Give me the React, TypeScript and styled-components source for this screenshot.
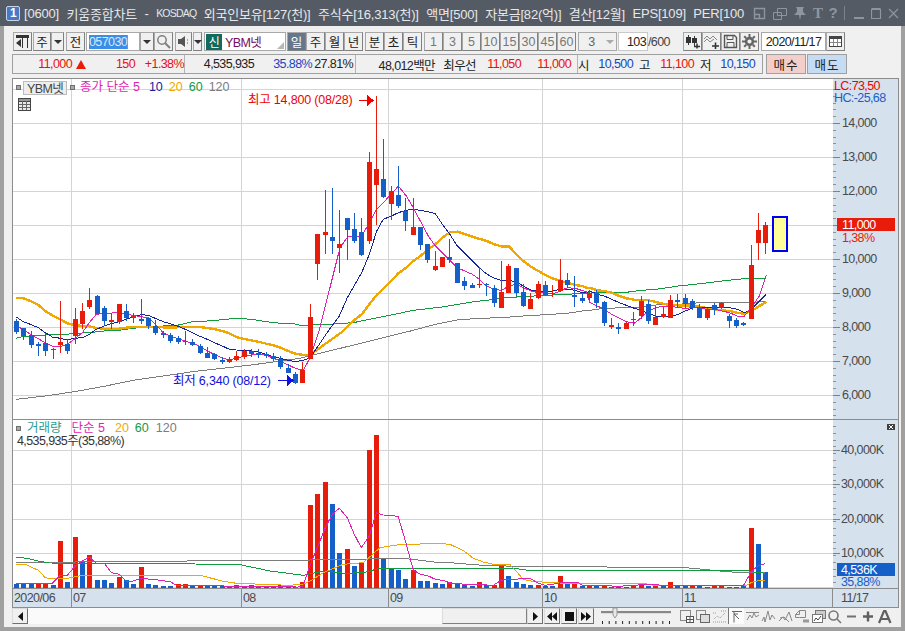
import { FC, ReactNode } from 'react';
import styled, { createGlobalStyle } from 'styled-components';

const uiFont = `"Liberation Sans", "Noto Sans CJK KR", sans-serif`;
const hangulFont = `"Noto Sans CJK KR", "Liberation Sans", sans-serif`;

const red = '#e81c0a';
const blue = '#1560c8';
const magenta = '#e01fb4';
const navy = '#14249c';
const orange = '#f0a800';
const green = '#129a3e';
const grey = '#7c7c7c';
const gridColor = '#d4d4d4';

type Dir = 'r' | 'b';
type Candle = [Dir, number, number, number, number];

// traced off the chart at 3x, so every block has its own origin
const zoomY = (oy: number, c: Candle[]): Candle[] =>
	c.map(([d, a, b, e, f]) => [d, oy + a / 3, oy + b / 3, oy + e / 3, oy + f / 3]);

const candles: Candle[] = [
	...zoomY(280, [
		['b', 115, 158, 119, 152], ['b', 140, 176, 141, 165], ['b', 150, 200, 162, 192], ['b', 182, 224, 190, 196],
		['b', 157, 224, 185, 210], ['b', 200, 233, 203, 208], ['r', 60, 215, 183, 192], ['b', 175, 220, 189, 210],
		['r', 80, 190, 114, 166], ['r', 67, 143, 90, 128], ['r', 22, 83, 57, 78], ['b', 42, 100, 45, 99],
		['b', 75, 135, 82, 120], ['r', 95, 145, 117, 122], ['r', 69, 130, 69, 122], ['b', 70, 120, 90, 110],
		['r', 95, 125, 105, 110], ['b', 54, 130, 114, 119], ['b', 110, 145, 111, 136], ['b', 118, 163, 136, 155],
		['b', 150, 172, 157, 163], ['b', 155, 185, 162, 180], ['b', 165, 188, 171, 182], ['b', 150, 192, 181, 184],
		['b', 174, 195, 183, 191], ['b', 190, 220, 195, 216], ['b', 198, 232, 216, 231], ['b', 215, 237, 219, 234],
		['b', 228, 250, 236, 244], ['r', 228, 245, 233, 243], ['r', 210, 240, 226, 238], ['r', 205, 235, 211, 229],
		['b', 205, 228, 209, 219], ['b', 205, 230, 217, 221], ['b', 212, 230, 218, 225], ['b', 215, 240, 225, 234],
		['b', 225, 263, 234, 258], ['b', 250, 276, 260, 276], ['b', 274, 308, 280, 306], ['r', 243, 305, 267, 305],
		['r', 70, 233, 108, 233],
	]),
	...zoomY(90, [
		['r', 430, 566, 430, 518], ['r', 297, 490, 423, 432], ['b', 292, 490, 438, 450], ['r', 357, 545, 460, 470],
		['b', 380, 508, 381, 416], ['b', 366, 455, 415, 450], ['b', 381, 496, 423, 491], ['r', 183, 460, 213, 450],
		['r', 15, 403, 234, 281], ['b', 144, 322, 265, 317], ['r', 285, 388, 300, 338], ['b', 225, 352, 312, 344],
		['b', 322, 420, 361, 389], ['r', 321, 433, 408, 431], ['b', 408, 476, 408, 461], ['b', 460, 515, 460, 506],
		['r', 480, 539, 526, 536], ['r', 498, 527, 498, 527], ['b', 444, 515, 498, 506], ['b', 516, 575, 516, 575],
		['b', 558, 596, 570, 584], ['b', 575, 592, 582, 590], ['r', 528, 590, 578, 581], ['b', 575, 615, 579, 581],
		['b', 582, 648, 592, 635], ['r', 510, 650, 603, 650], ['r', 519, 605, 525, 605], ['b', 531, 615, 531, 605],
		['b', 580, 648, 603, 644], ['r', 605, 653, 624, 653], ['r', 570, 625, 579, 622], ['b', 570, 615, 582, 611],
		['r', 583, 617, 605, 609], ['r', 505, 603, 567, 600], ['b', 546, 590, 567, 581], ['b', 555, 647, 611, 617],
		['b', 610, 635, 620, 630], ['r', 598, 628, 607, 620], ['b', 598, 650, 606, 635],
	]),
	...zoomY(200, [
		['b', 300, 376, 303, 365], ['r', 352, 383, 372, 377], ['b', 365, 398, 379, 383], ['r', 360, 385, 366, 384],
		['r', 333, 375, 354, 357], ['r', 285, 355, 300, 345], ['b', 298, 368, 310, 359], ['r', 315, 372, 347, 372],
		['r', 318, 350, 338, 348], ['r', 283, 352, 297, 350], ['b', 278, 320, 297, 303], ['b', 280, 320, 291, 308],
		['b', 295, 328, 300, 320], ['b', 310, 350, 318, 350], ['r', 320, 357, 324, 350], ['b', 306, 342, 312, 327],
		['r', 303, 325, 306, 322], ['b', 340, 380, 345, 359], ['b', 352, 380, 357, 375], ['b', 363, 376, 367, 371],
		['r', 132, 353, 192, 353], ['r', 37, 177, 87, 125], ['r', 63, 160, 72, 125],
	]),
];

const parseBars = (src: string, oy: number): [Dir, number][] =>
	src.split(' ').map((s) => [s[0] as Dir, oy + Number(s.slice(1)) / 3]);

const volumes: [Dir, number][] = [
	...parseBars(
		'b188 b188 b188 r188 r186 b191 r60 b183 r48 b122 r102 b177 b177 b186 r168 b177 b189 r138 b189 b192 b195 b195 r189 r189 b195 r195 b195 b195 b195 b197 r192 b195 r192 b197 b197 r195 r192 b197 b197 r183',
		520
	),
	...parseBars(
		'r252 r219 r183 b249 b396 r384 b435 r423 r87 r42 b414 b443 b447 b474 r447 b480 b480 b486 b489 r483 b489',
		420
	),
	...parseBars(
		'b102 b105 r93 b101 r101 r42 b75 b93 b99 b102 r102 b106 b104 r75 b98 r98 b105 r101 b105 r104 b107 r107 b107 r102 r98 b104 r105 b103 r93 b105 b105 r106 b105 b107 r106 r106 r107 b107 b106',
		550
	),
	['r', 527],
	['b', 543],
	['b', 571],
];

const barX = (i: number): number => Math.floor(16.3 + 7.35 * i);

const traced = (ox: number, oy: number, pts: number[]): string => {
	const out: string[] = [];
	for (let i = 0; i < pts.length; i += 2) {
		out.push(`${(ox + pts[i] / 3).toFixed(1)},${(oy + pts[i + 1] / 3).toFixed(1)}`);
	}
	return out.join(' ');
};

const priceLines = [
	{
		color: grey,
		width: 1,
		points: [
			traced(0, 280, [49, 355, 136, 345, 223, 332, 313, 316, 400, 298, 511, 282, 577, 272, 667, 262, 754, 252, 841, 240, 900, 232]),
			traced(300, 90, [60, 787, 340, 718, 406, 700, 472, 687, 538, 682, 604, 680, 670, 675, 736, 671, 802, 667, 860, 658]),
			traced(590, 200, [0, 328, 43, 322, 109, 320, 154, 318, 199, 312, 265, 310, 331, 305, 397, 305, 463, 305, 484, 305, 529, 300]),
		],
	},
	{
		color: green,
		width: 1,
		points: [
			traced(0, 280, [49, 172, 70, 166, 91, 165, 136, 162, 202, 160, 223, 157, 268, 155, 313, 150, 358, 148, 400, 142, 445, 137, 490, 135, 532, 133, 577, 122, 622, 120, 667, 116, 709, 112, 754, 115, 799, 122, 841, 127, 886, 129]),
			traced(300, 90, [0, 703, 85, 700, 160, 695, 208, 685, 274, 672, 340, 658, 427, 648, 517, 633, 583, 625, 604, 620, 670, 617, 736, 613, 802, 610, 860, 606]),
			traced(590, 200, [0, 273, 43, 274, 109, 274, 154, 268, 199, 265, 265, 255, 331, 248, 397, 240, 442, 235, 484, 232, 529, 231]),
		],
	},
	{
		color: orange,
		width: 2.4,
		points: [
			traced(0, 280, [49, 50, 70, 52, 91, 60, 115, 72, 136, 90, 157, 103, 181, 115, 202, 127, 223, 132, 247, 135, 268, 136, 289, 141, 313, 143, 334, 144, 358, 143, 379, 140, 400, 138, 424, 137, 445, 137, 466, 138, 490, 139, 532, 139, 556, 138, 598, 138, 622, 141, 643, 144, 667, 150, 688, 157, 709, 168, 733, 174, 754, 178, 775, 182, 799, 188, 820, 193, 841, 200, 865, 210, 886, 218, 910, 222]),
			traced(300, 90, [30, 792, 60, 770, 130, 720, 160, 690, 185, 670, 208, 640, 230, 612, 274, 570, 295, 547, 319, 530, 340, 510, 361, 495, 385, 475, 406, 460, 427, 440, 451, 423, 472, 422, 517, 437, 560, 450, 583, 460, 604, 466, 628, 467, 649, 490, 670, 510, 694, 528, 715, 540, 736, 552, 760, 563, 781, 570, 802, 575, 826, 582, 847, 585, 860, 590]),
			traced(590, 200, [0, 260, 22, 268, 43, 270, 65, 275, 88, 285, 109, 292, 133, 296, 154, 296, 175, 298, 199, 303, 220, 308, 241, 312, 265, 313, 286, 313, 310, 315, 331, 317, 352, 322, 376, 325, 397, 328, 418, 330, 442, 335, 463, 338, 484, 330, 508, 315, 529, 303]),
		],
	},
	{
		color: navy,
		width: 1,
		points: [
			traced(0, 280, [49, 108, 70, 122, 91, 130, 115, 140, 136, 155, 157, 168, 181, 172, 202, 177, 223, 172, 247, 170, 268, 160, 289, 145, 313, 135, 334, 128, 358, 122, 379, 115, 400, 107, 424, 101, 445, 103, 466, 112, 490, 122, 511, 128, 532, 135, 556, 145, 577, 155, 598, 165, 622, 175, 643, 185, 667, 195, 688, 205, 709, 207, 733, 208, 754, 210, 775, 212, 799, 220, 820, 228, 841, 232, 865, 238, 886, 242, 910, 238]),
			traced(300, 90, [30, 801, 85, 720, 118, 675, 142, 620, 185, 545, 208, 490, 230, 420, 250, 385, 274, 375, 295, 365, 319, 358, 340, 355, 361, 358, 385, 362, 406, 368, 427, 400, 451, 432, 472, 465, 517, 510, 538, 530, 559, 548, 583, 562, 604, 568, 628, 568, 649, 573, 670, 585, 694, 597, 715, 600, 760, 600, 781, 595, 802, 595, 826, 598, 847, 605, 860, 605]),
			traced(590, 200, [0, 270, 22, 280, 43, 285, 65, 295, 88, 305, 109, 313, 133, 322, 154, 328, 175, 338, 199, 345, 220, 348, 241, 347, 265, 340, 286, 330, 310, 320, 352, 320, 376, 318, 397, 318, 418, 320, 442, 325, 463, 335, 484, 325, 508, 300, 529, 280]),
		],
	},
	{
		color: magenta,
		width: 1,
		points: [
			traced(0, 280, [49, 135, 70, 145, 91, 160, 136, 185, 157, 195, 181, 197, 202, 190, 223, 175, 247, 155, 268, 125, 289, 100, 313, 97, 358, 95, 379, 100, 400, 103, 424, 107, 445, 110, 466, 130, 490, 155, 511, 165, 532, 172, 556, 180, 577, 187, 598, 195, 622, 210, 643, 220, 667, 232, 688, 236, 709, 232, 733, 225, 754, 222, 775, 220, 799, 222, 820, 232, 841, 240, 865, 252, 886, 262, 910, 268]),
			traced(300, 90, [30, 801, 57, 720, 85, 610, 120, 470, 145, 435, 185, 435, 208, 395, 230, 355, 274, 310, 295, 285, 319, 315, 340, 350, 361, 390, 385, 435, 406, 465, 427, 485, 451, 510, 472, 530, 517, 550, 538, 565, 559, 585, 583, 595, 604, 598, 628, 585, 649, 580, 670, 590, 694, 600, 715, 605, 760, 608, 781, 600, 802, 590, 826, 592, 860, 603]),
			traced(590, 200, [0, 305, 22, 315, 43, 325, 65, 340, 88, 352, 109, 362, 133, 367, 154, 350, 175, 330, 199, 320, 220, 315, 241, 315, 265, 320, 286, 322, 310, 320, 331, 322, 352, 325, 376, 325, 397, 330, 418, 335, 442, 345, 463, 345, 484, 320, 508, 285, 520, 250, 529, 222]),
		],
	},
];

const volumeLines = [
	{
		color: grey,
		width: 1,
		points: [
			traced(0, 520, [49, 124, 410, 122, 715, 118, 900, 118, 1000, 115, 1090, 115, 1140, 112, 1210, 112, 1320, 125, 1350, 125]),
			traced(450, 550, [0, 35, 35, 38, 100, 43, 235, 47, 695, 49, 760, 55, 830, 62, 900, 66, 946, 65]),
		],
	},
	{
		color: green,
		width: 1,
		points: [
			traced(0, 520, [49, 108, 80, 112, 115, 120, 148, 126, 715, 130, 810, 150, 910, 163, 970, 150, 1035, 157, 1090, 155, 1140, 142, 1350, 142]),
			traced(450, 550, [0, 52, 190, 52, 235, 58, 890, 58, 905, 62, 946, 67]),
		],
	},
	{
		color: orange,
		width: 1,
		points: [
			traced(0, 520, [49, 130, 80, 132, 115, 148, 136, 170, 157, 174, 202, 172, 247, 163, 600, 163, 667, 180, 709, 187, 865, 193, 910, 190, 931, 180, 970, 155, 1030, 130, 1090, 125, 1140, 80, 1190, 72, 1310, 67, 1350, 70]),
			traced(450, 550, [42, 0, 70, 22, 100, 33, 130, 40, 180, 41, 198, 60, 220, 85, 242, 90, 264, 92, 300, 95, 400, 98, 585, 98, 610, 103, 890, 103, 905, 94, 925, 89, 946, 89]),
		],
	},
	{
		color: magenta,
		width: 1,
		points: [
			traced(0, 520, [49, 187, 157, 187, 181, 163, 202, 163, 223, 138, 247, 120, 268, 108, 289, 127, 313, 127, 334, 155, 358, 160, 379, 180, 400, 180, 424, 172, 466, 176, 511, 182, 532, 194, 667, 194, 688, 197, 885, 197]),
			traced(290, 420, [15, 500, 39, 495, 61, 430, 82, 380, 106, 320, 127, 280, 148, 262, 172, 290, 193, 340, 214, 380, 238, 345, 259, 275, 280, 282, 304, 283, 325, 287, 349, 370, 370, 447, 391, 460, 415, 465, 436, 475, 457, 478, 481, 485]),
			traced(450, 550, [0, 97, 50, 100, 110, 102, 130, 103, 154, 88, 176, 85, 198, 85, 220, 82, 242, 83, 264, 96, 286, 103, 308, 100, 331, 95, 385, 95, 397, 103, 440, 103, 505, 106, 550, 103, 600, 100, 640, 103, 880, 104, 905, 60, 925, 45, 946, 38]),
		],
	},
];

const priceGrid = [88, 122, 156, 190, 224, 258, 292, 326, 360, 394];
const volumeGrid = [449, 483, 518, 552, 586];
const monthLines = [71, 241, 388, 542, 682];
const priceLabels = ['14,000', '13,000', '12,000', '', '10,000', '9,000', '8,000', '7,000', '6,000'];
const volumeLabels = ['40,000K', '30,000K', '20,000K', '10,000K'];

const intervals = ['1', '3', '5', '10', '15', '30', '45', '60'];

const minorTicks = (from: number, to: number, step: number): number[] => {
	const out: number[] = [];
	for (let y = from; y < to; y += step) out.push(Math.round(y));
	return out;
};

const PricePlot: FC = () => (
	<PlotSvg width={820} height={340} viewBox="13 78 820 340">
		{priceGrid.map((y) => (
			<rect key={y} x={13} y={y} width={820} height={1} fill={gridColor} />
		))}
		{monthLines.map((x) => (
			<rect key={x} x={x} y={78} width={1} height={340} fill={gridColor} />
		))}
		{priceLines.map((line) => (
			<polyline
				key={line.color}
				points={line.points.join(' ')}
				fill="none"
				stroke={line.color}
				strokeWidth={line.width}
			/>
		))}
		{candles.map(([dir, wickTop, wickBottom, bodyTop, bodyBottom], i) => (
			<g key={i} fill={dir === 'r' ? red : blue}>
				<rect x={barX(i)} y={wickTop} width={1} height={wickBottom - wickTop} />
				<rect x={barX(i) - 2} y={bodyTop} width={5} height={Math.max(bodyBottom - bodyTop, 1)} />
			</g>
		))}
		<rect x={773} y={216} width={14} height={34} fill="#ffff99" stroke="#0000f0" strokeWidth={2} />
		<text x={248} y={103} fill="#f00000">최고 14,800 (08/28)</text>
		<path d="M359 99.500h8M367 94.500l6 5-6 5z" stroke="#f00000" fill="#f00000" />
		<text x={173} y={384} fill="#1010e0">최저 6,340 (08/12)</text>
		<path d="M278 379.500h9M287 374.500l6 5-6 5z" stroke="#1010e0" fill="#1010e0" />
	</PlotSvg>
);

const VolumePlot: FC = () => (
	<PlotSvg width={820} height={168} viewBox="13 419 820 168">
		{volumeGrid.map((y) => (
			<rect key={y} x={13} y={y} width={820} height={1} fill={gridColor} />
		))}
		{monthLines.map((x) => (
			<rect key={x} x={x} y={419} width={1} height={168} fill={gridColor} />
		))}
		{volumes.map(([dir, top], i) => (
			<rect
				key={i}
				x={barX(i) - 2}
				y={top}
				width={5}
				height={Math.max(587 - top, 1)}
				fill={dir === 'r' ? red : blue}
			/>
		))}
		{volumeLines.map((line) => (
			<polyline
				key={line.color}
				points={line.points.join(' ')}
				fill="none"
				stroke={line.color}
				strokeWidth={line.width}
			/>
		))}
	</PlotSvg>
);

const PriceAxis: FC = () => (
	<AxisSvg width={65} height={340} viewBox="833 78 65 340">
		{minorTicks(88, 418, 6.8).map((y) => (
			<rect key={y} x={833} y={y} width={3} height={1} fill="#8c929a" />
		))}
		{priceGrid.slice(1).map((y) => (
			<rect key={y} x={833} y={y} width={7} height={1} fill="#7c828a" />
		))}
		{priceLabels.map((label, i) => (
			<text key={label + i} x={842} y={126 + i * 34}>{label}</text>
		))}
		<text x={834} y={89} fill="#f00000">LC:73,50</text>
		<text x={834} y={101} fill={blue}>HC:-25,68</text>
		<rect x={837} y={217} width={58} height={13} fill={red} />
		<text x={842} y={228} fill="#fff">11,000</text>
		<text x={842} y={241} fill={red}>1,38%</text>
	</AxisSvg>
);

const VolumeAxis: FC = () => (
	<AxisSvg width={65} height={168} viewBox="833 419 65 168">
		{minorTicks(425, 587, 6.8).map((y) => (
			<rect key={y} x={833} y={y} width={3} height={1} fill="#8c929a" />
		))}
		{volumeGrid.slice(0, 4).map((y) => (
			<rect key={y} x={833} y={y} width={7} height={1} fill="#7c828a" />
		))}
		{volumeLabels.map((label, i) => (
			<text key={label} x={841} y={453 + i * 34.3}>{label}</text>
		))}
		<rect x={887} y={423} width={8} height={6} fill="#404040" />
		<path d="M889 424l4 4M893 424l-4 4" stroke="#fff" />
		<rect x={837} y={562} width={58} height={13} fill={blue} />
		<text x={841} y={573} fill="#fff">4,536K</text>
		<text x={841} y={584.5} fill={blue}>35,88%</text>
	</AxisSvg>
);

const Icon: FC<{ w?: number; h?: number; children: ReactNode }> = ({ w = 15, h = 15, children }) => (
	<svg width={w} height={h} viewBox={`0 0 ${w} ${h}`}>{children}</svg>
);

const footerIcons: ReactNode[] = [
	<g fill="none" stroke="#8a8a8a"><rect x="1.5" y="1.5" width="10" height="10" /><rect x="7.5" y="7.5" width="7" height="6" fill="#fff" stroke="#555" /><path d="M11 7.500v6M7.500 10.500h7" stroke="#555" /></g>,
	<g fill="none" stroke="#8a8a8a"><rect x="1.5" y="1.5" width="9" height="9" /><rect x="5.5" y="5.5" width="9" height="8" fill="#ddd" stroke="#666" /></g>,
	<path d="M1 4h4M9 2h5M1 13h13M2 10l3-3 3 2 5-5" fill="none" stroke="#999" strokeDasharray="1 1" />,
	<path d="M3 2.500h10M5 2.500v11M5 5l5 5M5 5h4" fill="none" stroke="#666" />,
	<path d="M1 3.500h13M2 11l3-5 2 3 2-5 2 4 3-2" fill="none" stroke="#888" />,
	<path d="M1 12l2-4 1 5 3-11 2 9 2-5 3 4" fill="none" stroke="#888" />,
	<path d="M1 12l4-4 2 3 4-8 3 9M2 9l4-1 5 5" fill="none" stroke="#888" />,
	<g fill="none" stroke="#888"><path d="M1.500 5.500l4-4h6v7h-6l-4 0zM5.500 1.500v4h-4" /><path d="M10 13.500v-3M12 13.500v-3M14 13.500v-3" stroke="#444" /></g>,
	<g fill="none" stroke="#777"><rect x="4.5" y="1.5" width="10" height="8" fill="#ccc" /><rect x="1.5" y="5.5" width="10" height="8" fill="#fff" /><path d="M3 12l2-3 2 2 3-4" stroke="#444" /></g>,
	<g fill="none" stroke="#777" strokeWidth="1.6"><circle cx="6.5" cy="6.5" r="4.5" /><path d="M10 10l4 4" /></g>,
	<rect x="3" y="6.5" width="9" height="2" fill="#707070" />,
	<path d="M3 7.500h10M8 2.500v10" stroke="#606060" strokeWidth="2.4" fill="none" />,
	<path d="M2 14L7 2h1.500l5 12M4 10h7" fill="none" stroke="#606060" strokeWidth="2.2" />,
];

const App: FC = () => {
	return (
		<>
			<GlobalStyle />
			<Window>
				<TitleBar>
					<WindowBadge>1</WindowBadge>
					<TitleText>
						<span>[0600]</span>
						<span>키움종합차트</span>
						<span>-</span>
						<Caps>KOSDAQ</Caps>
						<span>외국인보유[127(천)]</span>
						<span>주식수[16,313(천)]</span>
						<span>액면[500]</span>
						<span>자본금[82(억)]</span>
						<span>결산[12월]</span>
						<span>EPS[109]</span>
						<span>PER[100</span>
					</TitleText>
					<TitleIcons>
						<Icon w={13} h={13}><path d="M1.500 1.500h10v10h-10zM1.500 7.500h5v4" fill="none" stroke="#8f959d" strokeWidth="1.4" /></Icon>
						<Icon w={15} h={13}><path d="M5.500 1.500h9v7h-9zM1.500 5.500h8v7h-8z" fill="none" stroke="#8f959d" /></Icon>
						<Icon w={14} h={14}><path d="M3 1h8l-1 2v3l3 3H1l3-3V3zM6 9h2l-1 5z" fill="#8f959d" /></Icon>
						<TitleGlyph $serif>T</TitleGlyph>
						<TitleGlyph>?</TitleGlyph>
						<TitleDivider />
						<Icon w={11} h={12}><rect y={10} width={10} height={2} fill="#8f959d" /></Icon>
						<Icon w={11} h={12}><path d="M.5 2.500h9v9h-9zM.5 1.500h9" fill="none" stroke="#8f959d" strokeWidth="1.2" /></Icon>
						<Icon w={11} h={12}><path d="M1 2l9 9M10 2l-9 9" stroke="#8f959d" strokeWidth="1.2" /></Icon>
					</TitleIcons>
				</TitleBar>
				<Body>
					<ToolRow>
						<ToolButton>
							<Icon>
								<rect x={1} y={1} width={13} height={3} fill="#333" />
								<path d="M7.500 4v10M12.500 4v10" stroke="#333" fill="none" />
								<path d="M1 9l5-4v8z" fill="#333" />
							</Icon>
						</ToolButton>
						<ToolButton $w={18} $ml={1}>주</ToolButton>
						<ArrowButton $w={13} />
						<ToolButton $ml={2}>전</ToolButton>
						<CodeField><CodeSelected>057030</CodeSelected></CodeField>
						<ArrowButton $w={14} />
						<ToolButton>
							<Icon>
								<circle cx={6} cy={6} r={4.2} fill="none" stroke="#808080" strokeWidth={1.5} />
								<path d="M9 9l5 5" stroke="#808080" strokeWidth={2} />
							</Icon>
						</ToolButton>
						<ToolButton $w={17} $ml={2}>
							<Icon w={13} h={13}>
								<path d="M1 4h3l4-3v11L4 9H1z" fill="#555" />
								<path d="M10 5h2M10 8h2" stroke="#555" strokeDasharray="1 1" />
							</Icon>
						</ToolButton>
						<ArrowButton $w={9} $ml={1} />
						<StockField>
							<StockTag>신</StockTag>
							<StockName>YBM넷</StockName>
							<StockCorner />
						</StockField>
						<ToolButton $active $ml={1}>일</ToolButton>
						<ToolButton>주</ToolButton>
						<ToolButton>월</ToolButton>
						<ToolButton>년</ToolButton>
						<ToolButton $ml={2}>분</ToolButton>
						<ToolButton>초</ToolButton>
						<ToolButton>틱</ToolButton>
						{intervals.map((n, i) => (
							<ToolButton key={n} $dim $ml={i === 0 ? 2 : 0}>{n}</ToolButton>
						))}
						<RangeField>
							<RangeValue>3</RangeValue>
							<DimArrow />
						</RangeField>
						<CountField>103</CountField>
						<CountMax>/600</CountMax>
						<ToolButton $ml={11}>
							<Icon>
								<path d="M3.500 1v10M9.500 2v10" stroke="#333" fill="none" />
								<rect x={1} y={3} width={5} height={6} fill="#333" />
								<rect x={7} y={4} width={5} height={5} fill="#333" />
								<path d="M9 12.500h6M12 9.500v5" stroke="#333" strokeWidth={1.5} />
							</Icon>
						</ToolButton>
						<ToolButton>
							<Icon>
								<path d="M0 5l3-3 3 3 3-3 4 4M0 8l3-3 3 3 4-3" fill="none" stroke="#888" />
								<path d="M8 12h7M11.500 8.500v6.500" stroke="#333" strokeWidth={1.6} />
							</Icon>
						</ToolButton>
						<ToolButton>
							<Icon>
								<path d="M1.500 1.500h10l2 2v10h-12z" fill="none" stroke="#555" strokeWidth={1.4} />
								<path d="M4 1.500v4h6v-4M4 13.500v-5h7v5" fill="none" stroke="#555" />
							</Icon>
						</ToolButton>
						<ToolButton>
							<Icon>
								<circle cx={7.5} cy={7.5} r={3.4} fill="none" stroke="#666" strokeWidth={2.6} />
								<path d="M7.500 0v3M7.500 12v3M0 7.500h3M12 7.500h3M2.200 2.200l2 2M10.800 10.800l2 2M2.200 12.800l2-2M10.800 4.200l2-2" stroke="#666" strokeWidth={2} />
							</Icon>
						</ToolButton>
						<DateField>2020/11/17</DateField>
						<ToolButton>
							<Icon>
								<rect x={1.5} y={2.5} width={12} height={10} fill="#fff" stroke="#444" />
								<rect x={1} y={2} width={13} height={3} fill="#444" />
								<path d="M5.500 5v7M9.500 5v7M2 8.500h11" stroke="#888" />
							</Icon>
						</ToolButton>
					</ToolRow>
					<InfoRow>
						<InfoBar>
							<InfoCell $w={172}>
								<Num $w={59} $c="#e8100a">11,000</Num>
								<UpTriangle />
								<Num $w={48} $c="#e8100a">150</Num>
								<Num $w={49} $c="#e8100a">+1.38%</Num>
							</InfoCell>
							<InfoCell $w={171}>
								<Num $w={69}>4,535,935</Num>
								<Num $w={58} $c="#1547c0">35.88%</Num>
								<Num $w={41}>27.81%</Num>
							</InfoCell>
							<InfoCell $w={222}>
								<Num $w={79}>48,012백만</Num>
								<Num $w={41}>최우선</Num>
								<Num $w={45} $c="#e8100a">11,050</Num>
								<Num $w={50} $c="#e8100a">11,000</Num>
							</InfoCell>
							<InfoCell $w={184}>
								<Num $w={11}>시</Num>
								<Num $w={44} $c="#1547c0">10,500</Num>
								<Num $w={17}>고</Num>
								<Num $w={44} $c="#e8100a">11,100</Num>
								<Num $w={17}>저</Num>
								<Num $w={44} $c="#1547c0">10,150</Num>
							</InfoCell>
						</InfoBar>
						<TradeButton $bg="#f4cfc9" $ml={3}>매수</TradeButton>
						<TradeButton $bg="#c5dcf2" $ml={1}>매도</TradeButton>
					</InfoRow>
					<ChartFrame>
						<PaneRow $h={340}>
							<Plot>
								<PricePlot />
								<PriceLegend>
									<LegendDot />
									<StockChip>YBM넷</StockChip>
									<LegendDot />
									<LegendText $c={magenta} $ml={5}>종가 단순 5</LegendText>
									<LegendText $c={navy} $ml={9}>10</LegendText>
									<LegendText $c={orange}>20</LegendText>
									<LegendText $c={green}>60</LegendText>
									<LegendText $c={grey}>120</LegendText>
								</PriceLegend>
								<GridToggle>
									<Icon w={13} h={13}>
										<rect x={.5} y={.5} width={12} height={12} fill="#e8e8e8" stroke="#444" />
										<rect x={.5} y={.5} width={12} height={3} fill="#999" stroke="#444" />
										<path d="M4.500 3v9M8.500 3v9M1 6.500h11M1 9.500h11" stroke="#666" />
									</Icon>
								</GridToggle>
							</Plot>
							<PriceAxis />
						</PaneRow>
						<PaneRow $h={168} $divided>
							<Plot>
								<VolumePlot />
								<VolumeLegend>
									<LegendLine>
										<LegendDot />
										<LegendText $c="#2a9d8f" $ml={6}>거래량</LegendText>
										<LegendText $c={magenta} $ml={10}>단순 5</LegendText>
										<LegendText $c={orange} $ml={10}>20</LegendText>
										<LegendText $c={green}>60</LegendText>
										<LegendText $c={grey} $ml={7}>120</LegendText>
									</LegendLine>
									<VolumeNote>4,535,935주(35,88%)</VolumeNote>
								</VolumeLegend>
							</Plot>
							<VolumeAxis />
						</PaneRow>
						<DateAxis>
							<DateCell $w={59}>2020/06</DateCell>
							<DateCell $w={170}>07</DateCell>
							<DateCell $w={147}>08</DateCell>
							<DateCell $w={154}>09</DateCell>
							<DateCell $w={140}>10</DateCell>
							<DateCell $w={150}>11</DateCell>
							<DateCell $w={65} $last>11/17</DateCell>
						</DateAxis>
					</ChartFrame>
					<ScrollRow>
						<ScrollButton $w={16}>
							<Icon w={7} h={9}><path d="M6 0v9L1 4.500z" fill="#111" /></Icon>
						</ScrollButton>
						<ScrollTrack>
							<ScrollThumb />
						</ScrollTrack>
						<ScrollButton $w={16}>
							<Icon w={7} h={9}><path d="M1 0v9l5-4.500z" fill="#111" /></Icon>
						</ScrollButton>
						<ScrollButton $w={16} $ml={1}>
							<Icon w={12} h={9}><path d="M6 0v9L1 4.500zM11 0v9L6 4.500z" fill="#111" /></Icon>
						</ScrollButton>
						<ScrollButton $w={16} $ml={1}>
							<Icon w={9} h={9}><rect width={9} height={9} fill="#111" /></Icon>
						</ScrollButton>
						<ScrollButton $w={16} $ml={1}>
							<Icon w={12} h={9}><path d="M1 0v9l5-4.500zM6 0v9l5-4.500z" fill="#111" /></Icon>
						</ScrollButton>
						<SpeedSlider>
							<svg width={72} height={17} viewBox="0 0 72 17">
								<rect x={1} y={3} width={70} height={2} fill="#888" />
								<rect x={1} y={5} width={70} height={1} fill="#ddd" />
								<path d="M13 0h4v7l-2 3-2-3z" fill="#e8e8e8" stroke="#999" />
								{Array.from({ length: 11 }, (_, i) => (
									<rect key={i} x={2 + i * 6.7} y={13} width={1} height={3} fill="#222" />
								))}
							</svg>
						</SpeedSlider>
						<FooterIcons>
							{footerIcons.map((icon, i) => (
								<FooterIcon key={i} $on={i === 3} $gap={i === 3}>
									<Icon>{icon}</Icon>
								</FooterIcon>
							))}
						</FooterIcons>
					</ScrollRow>
				</Body>
			</Window>
		</>
	);
};

export default App;

const GlobalStyle = createGlobalStyle`
	html, body {
		margin: 0;
		padding: 0;
		background: #f0f0f0;
	}
	* {
		box-sizing: border-box;
	}
`;

const Window = styled.div`
	width: 905px;
	height: 631px;
	display: flex;
	flex-direction: column;
	overflow: hidden;
	font-family: ${uiFont};
	font-size: 12.5px;
	letter-spacing: -0.6px;
	color: #222;
`;

const TitleBar = styled.div`
	height: 26px;
	flex: none;
	display: flex;
	align-items: center;
	padding-left: 6px;
	background: #545b65;
`;

const WindowBadge = styled.div`
	width: 14px;
	height: 15px;
	flex: none;
	display: flex;
	align-items: center;
	justify-content: center;
	background: #4a78c4;
	border: 1px solid #c4d4ee;
	border-radius: 2px;
	color: #fff;
	font: bold 12px "Liberation Sans", sans-serif;
`;

const TitleText = styled.div`
	width: 722px;
	margin-left: 4px;
	flex: none;
	display: flex;
	align-items: center;
	gap: 7.5px;
	white-space: nowrap;
	overflow: hidden;
	color: #e6e8ea;
	font-size: 13px;
	letter-spacing: -0.2px;
`;

const Caps = styled.span`
	font-size: 10.5px;
	letter-spacing: -0.8px;
`;

const TitleIcons = styled.div`
	display: flex;
	align-items: center;
	gap: 6px;
	margin-left: 7px;
`;

const TitleGlyph = styled.span<{ $serif?: boolean }>`
	color: #8f959d;
	font: bold 15px ${(props) => (props.$serif ? '"Liberation Serif", serif' : '"Liberation Sans", sans-serif')};
	line-height: 14px;
`;

const TitleDivider = styled.div`
	width: 1px;
	height: 14px;
	background: #7d838b;
	margin: 0 3px 0 1px;
`;

const Body = styled.div`
	flex: 1;
	display: flex;
	flex-direction: column;
	padding: 6px 0 0 8px;
	border-left: 4px solid #a0a0a0;
	border-right: 4px solid #a0a0a0;
	border-bottom: 4px solid #a0a0a0;
	background: #f0f0f0;
`;

const ToolRow = styled.div`
	height: 19px;
	display: flex;
	align-items: stretch;
	margin-left: 1px;
`;

const ToolButton = styled.div<{ $w?: number; $ml?: number; $active?: boolean; $dim?: boolean }>`
	width: ${(props) => props.$w ?? 19}px;
	margin-left: ${(props) => props.$ml ?? 0}px;
	flex: none;
	display: flex;
	align-items: center;
	justify-content: center;
	border: 1px solid #a8a8a8;
	border-right-color: #808080;
	border-bottom-color: #808080;
	background: ${(props) => (props.$active ? '#66778c' : '#f0f0f0')};
	color: ${(props) => (props.$active ? '#fff' : props.$dim ? '#777' : '#222')};
	font-family: ${(props) => (props.$dim ? uiFont : hangulFont)};
	font-size: 12.5px;
	letter-spacing: 0;
`;

const ArrowButton = styled(ToolButton)`
	&::after {
		content: '';
		border-left: 4px solid transparent;
		border-right: 4px solid transparent;
		border-top: 4px solid #333;
	}
`;

const CodeField = styled.div`
	width: 54px;
	margin-left: 1px;
	flex: none;
	display: flex;
	align-items: center;
	padding-left: 2px;
	background: #fff;
	border: 1px solid #a8a8a8;
`;

const CodeSelected = styled.span`
	background: #3a8ee6;
	color: #dbe9f8;
	line-height: 14px;
	border-right: 1px solid #e08020;
`;

const StockField = styled.div`
	width: 82px;
	margin-left: 2px;
	flex: none;
	position: relative;
	display: flex;
	align-items: center;
	background: #fff;
	border: 1px solid #a8a8a8;
`;

const StockTag = styled.span`
	width: 16px;
	height: 16px;
	margin-left: 1px;
	display: flex;
	align-items: center;
	justify-content: center;
	background: #0e6b5e;
	color: #fff;
	font: 12px ${hangulFont};
`;

const StockName = styled.span`
	margin-left: 3px;
	color: #7a0a5a;
`;

const StockCorner = styled.span`
	position: absolute;
	right: 1px;
	bottom: 1px;
	border-left: 7px solid transparent;
	border-bottom: 7px solid #b8b8b8;
`;

const RangeField = styled.div`
	width: 39px;
	margin-left: 2px;
	flex: none;
	display: flex;
	align-items: center;
	border: 1px solid #a8a8a8;
	color: #666;
`;

const RangeValue = styled.span`
	width: 25px;
	text-align: center;
`;

const DimArrow = styled.span`
	margin-left: 2px;
	border-left: 4px solid transparent;
	border-right: 4px solid transparent;
	border-top: 4px solid #aaa;
`;

const CountField = styled.div`
	width: 30px;
	margin-left: 1px;
	flex: none;
	display: flex;
	align-items: center;
	justify-content: flex-end;
	padding-right: 1px;
	background: #fff;
	border: 1px solid #c8c8c8;
`;

const CountMax = styled.div`
	width: 24px;
	flex: none;
	display: flex;
	align-items: center;
	color: #444;
`;

const DateField = styled.div`
	width: 65px;
	margin-left: 2px;
	flex: none;
	display: flex;
	align-items: center;
	justify-content: center;
	background: #fff;
	border: 1px solid #a8a8a8;
`;

const InfoRow = styled.div`
	height: 20px;
	margin-top: 3px;
	display: flex;
`;

const InfoBar = styled.div`
	display: flex;
	border: 1px solid #a0a0a0;
	background: #f0f0f0;
`;

const InfoCell = styled.div<{ $w: number }>`
	width: ${(props) => props.$w}px;
	flex: none;
	display: flex;
	align-items: center;
	border-right: 1px solid #b4b4b4;
	&:last-child {
		border-right: none;
	}
`;

const Num = styled.span<{ $w: number; $c?: string }>`
	width: ${(props) => props.$w}px;
	flex: none;
	text-align: right;
	white-space: nowrap;
	color: ${(props) => props.$c ?? '#222'};
`;

const UpTriangle = styled.span`
	width: 0;
	height: 0;
	margin: 0 1px 0 4px;
	flex: none;
	border-left: 5px solid transparent;
	border-right: 5px solid transparent;
	border-bottom: 9px solid ${red};
`;

const TradeButton = styled.div<{ $bg: string; $ml: number }>`
	width: 40px;
	margin-left: ${(props) => props.$ml}px;
	flex: none;
	display: flex;
	align-items: center;
	justify-content: center;
	background: ${(props) => props.$bg};
	border: 1px solid #a0a0a0;
	letter-spacing: 1px;
	font: 12.5px ${hangulFont};
`;

const ChartFrame = styled.div`
	width: 887px;
	height: 530px;
	margin-top: 4px;
	flex: none;
	display: flex;
	flex-direction: column;
	border: 1px solid #8c8c8c;
	background: #fff;
`;

const PaneRow = styled.div<{ $h: number; $divided?: boolean }>`
	height: ${(props) => props.$h + (props.$divided ? 1 : 0)}px;
	flex: none;
	display: flex;
	border-top: ${(props) => (props.$divided ? '1px solid #8c8c8c' : 'none')};
`;

const Plot = styled.div`
	width: 820px;
	flex: none;
	position: relative;
	background: #fff;
`;

const PlotSvg = styled.svg`
	display: block;
	shape-rendering: crispEdges;
	text {
		font-family: ${uiFont};
		font-size: 12.5px;
		letter-spacing: -0.2px;
	}
`;

const AxisSvg = styled.svg`
	display: block;
	flex: none;
	background: #d6e1ee;
	text {
		font-family: ${uiFont};
		font-size: 12.5px;
		letter-spacing: -0.6px;
		fill: #4a4a4a;
	}
	text[fill] {
		fill: revert-layer;
	}
`;

const PriceLegend = styled.div`
	position: absolute;
	left: 3px;
	top: 1px;
	display: flex;
	align-items: center;
	height: 15px;
`;

const LegendDot = styled.span`
	width: 5px;
	height: 5px;
	flex: none;
	background: #a8a8a8;
	border: 1px solid #707070;
`;

const StockChip = styled.span`
	width: 44px;
	height: 14px;
	margin: 0 3px 0 2px;
	padding-left: 3px;
	display: flex;
	align-items: center;
	background: #eeeeee;
	border: 1px solid #bcbcbc;
	color: #444;
`;

const LegendText = styled.span<{ $c: string; $ml?: number }>`
	margin-left: ${(props) => props.$ml ?? 6}px;
	color: ${(props) => props.$c};
	white-space: nowrap;
	line-height: 15px;
	letter-spacing: 0;
`;

const GridToggle = styled.div`
	position: absolute;
	left: 5px;
	top: 19px;
	display: flex;
`;

const VolumeLegend = styled.div`
	position: absolute;
	left: 3px;
	top: 1px;
	display: flex;
	flex-direction: column;
`;

const LegendLine = styled.div`
	display: flex;
	align-items: center;
	height: 14px;
`;

const VolumeNote = styled.div`
	margin-left: 1px;
	color: #333;
	line-height: 13px;
`;

const DateAxis = styled.div`
	height: 19px;
	flex: none;
	display: flex;
	border-top: 1px solid #8c8c8c;
	background: #d6e1ee;
`;

const DateCell = styled.div<{ $w: number; $last?: boolean }>`
	width: ${(props) => props.$w}px;
	flex: none;
	padding-left: ${(props) => (props.$last ? 8 : 1)}px;
	border-right: ${(props) => (props.$last ? 'none' : '1px solid #8c8c8c')};
	color: #4a4a4a;
	line-height: 18px;
`;

const ScrollRow = styled.div`
	height: 16px;
	display: flex;
	align-items: stretch;
`;

const ScrollButton = styled.div<{ $w: number; $ml?: number }>`
	width: ${(props) => props.$w}px;
	margin-left: ${(props) => props.$ml ?? 0}px;
	flex: none;
	display: flex;
	align-items: center;
	justify-content: center;
	background: #f0f0f0;
	border: 1px solid #dcdcdc;
	border-right-color: #707070;
	border-bottom-color: #707070;
`;

const ScrollTrack = styled.div`
	width: 499px;
	flex: none;
	display: flex;
	justify-content: flex-end;
	background-color: #fafafa;
	background-image: radial-gradient(#dedede 0.5px, transparent 0.6px);
	background-size: 2px 2px;
`;

const ScrollThumb = styled.div`
	width: 85px;
	background: #f0f0f0;
	border: 1px solid #dcdcdc;
	border-right-color: #808080;
	border-bottom-color: #808080;
`;

const SpeedSlider = styled.div`
	margin-left: 6px;
	flex: none;
	display: flex;
`;

const FooterIcons = styled.div`
	margin-left: 6px;
	flex: none;
	display: flex;
`;

const FooterIcon = styled.div<{ $on?: boolean; $gap?: boolean }>`
	width: 16.5px;
	flex: none;
	display: flex;
	align-items: center;
	justify-content: center;
	background: ${(props) => (props.$on ? '#fbfbfb' : 'transparent')};
	border-left: ${(props) => (props.$gap ? '1px solid #777' : 'none')};
`;
